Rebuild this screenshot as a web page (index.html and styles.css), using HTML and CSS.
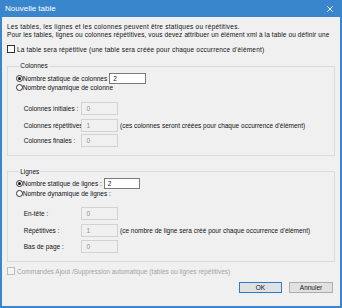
FILE: index.html
```html
<!DOCTYPE html>
<html lang="fr">
<head>
<meta charset="utf-8">
<title>Nouvelle table</title>
<link rel="stylesheet" href="styles.css">
</head>
<body>
<div class="window">
  <div class="titlebar">
    <span class="title">Nouvelle table</span>
    <svg class="close" width="6" height="6" viewBox="0 0 6 6"><path d="M0.3 0.3L5.7 5.7M5.7 0.3L0.3 5.7" stroke="#fff" stroke-width="0.9" fill="none"/></svg>
  </div>
  <div class="main">
    <div class="intro">
      <p class="l1">Les tables, les lignes et les colonnes peuvent être statiques ou répétitives.</p>
      <p class="l2">Pour les tables, lignes ou colonnes répétitives, vous devez attribuer un élément xml à la table ou définir une</p>
    </div>
    <label class="check"><span class="box"></span><span class="wide">La table sera répétitive (une table sera créée pour chaque occurrence d'élément)</span></label>

    <fieldset class="group">
      <legend>Colonnes</legend>
      <div class="row static"><span class="radio checked"></span><span class="rlabel">Nombre statique de colonnes</span><span class="field active cols">2</span></div>
      <div class="row dyn"><span class="radio"></span><span class="rlabel">Nombre dynamique de colonne</span></div>
      <div class="sub">
        <div class="subrow"><span class="sublabel">Colonnes initiales :</span><span class="field disabled">0</span></div>
        <div class="subrow second"><span class="sublabel">Colonnes répétitives</span><span class="field disabled">1</span><span class="note">(ces colonnes seront créées pour chaque occurrence d'élément)</span></div>
        <div class="subrow third"><span class="sublabel">Colonnes finales :</span><span class="field disabled">0</span></div>
      </div>
    </fieldset>

    <fieldset class="group lines">
      <legend>Lignes</legend>
      <div class="row static"><span class="radio checked"></span><span class="rlabel">Nombre statique de lignes :</span><span class="field active rows">2</span></div>
      <div class="row dyn"><span class="radio"></span><span class="rlabel">Nombre dynamique de lignes :</span></div>
      <div class="sub">
        <div class="subrow"><span class="sublabel">En-tête :</span><span class="field disabled">0</span></div>
        <div class="subrow second"><span class="sublabel">Répétitives :</span><span class="field disabled">1</span><span class="note">(ce nombre de ligne sera créé pour chaque occurrence d'élément)</span></div>
        <div class="subrow third"><span class="sublabel">Bas de page :</span><span class="field disabled">0</span></div>
      </div>
    </fieldset>

    <label class="check off"><span class="box"></span><span>Commandes Ajout /Suppression automatique (tables ou lignes répétitives)</span></label>

    <div class="buttons">
      <button class="btn default">OK</button>
      <button class="btn">Annuler</button>
    </div>
  </div>
</div>
</body>
</html>
```

FILE: styles.css
```css
* { box-sizing: border-box; }
html, body { margin: 0; padding: 0; background: #f0f0f0; }
body {
  font-family: "Liberation Sans", Arial, sans-serif;
  font-size: 6.5px;
  color: #111;
}
p { margin: 0; }

.window {
  width: 342px;
  height: 308px;
  background: #f0f0f0;
  border: 2px solid #3a86cc;
  border-top: 0;
  display: flex;
  flex-direction: column;
}

.titlebar {
  flex: none;
  height: 17px;
  margin: 0 -2px;
  padding: 0 9px 0 5px;
  background: #3a86cc;
  color: #fff;
  display: flex;
  align-items: center;
  justify-content: space-between;
  font-size: 8px;
}
.close { display: block; }

.main {
  flex: 1;
  display: flex;
  flex-direction: column;
  padding: 6px 5px 0 5px;
}

.intro {
  height: 21px;
  line-height: 8px;
  white-space: nowrap;
}
.intro .l1 { letter-spacing: 0.25px; }
.intro .l2 { letter-spacing: 0.12px; }

.wide { letter-spacing: 0.18px; white-space: nowrap; }

.check {
  display: flex;
  align-items: center;
  height: 9px;
  margin-top: 0.5px;
  line-height: 9px;
}
.box {
  width: 8px;
  height: 8px;
  border: 1px solid #333;
  background: #fff;
  margin-right: 2px;
  flex: none;
}
.check.off { color: #a3a3a3; margin-top: 5px; }
.check.off .box { border-color: #bcbcbc; background: #f4f4f4; }

.group {
  margin: 8.5px 0 0 0;
  padding: 0 0 8.3px 7.7px;
  border: 1px solid #dcdcdc;
  min-inline-size: 0;
}
.group.lines { margin-top: 11.3px; }
.group legend {
  padding: 0 1px;
  margin-left: 3.5px;
  line-height: 8px;
  height: 8px;
}

.row {
  display: flex;
  align-items: center;
}
.row.static { height: 11px; margin-top: 2.5px; }
.row.dyn { height: 8px; }

.radio {
  width: 7px;
  height: 7px;
  border: 1px solid #333;
  border-radius: 50%;
  background: #fff;
  flex: none;
  display: flex;
  align-items: center;
  justify-content: center;
}
.radio.checked::after {
  content: "";
  width: 3px;
  height: 3px;
  border-radius: 50%;
  background: #111;
}

.field {
  display: flex;
  align-items: center;
  width: 36.6px;
  flex: none;
  padding-left: 4px;
}
.field.active {
  height: 11px;
  background: #fff;
  border: 1px solid #7a7a7a;
  padding-left: 3px;
  margin-left: 2px;
}
.field.disabled {
  height: 13px;
  background: #f0f0f0;
  border: 1px solid #d2d2d2;
  color: #8c8c8c;
}

.sub {
  margin-top: 10px;
  padding-left: 8px;
  display: flex;
  flex-direction: column;
}
.subrow {
  display: flex;
  align-items: center;
  height: 13px;
}
.subrow.second { margin-top: 4px; }
.subrow.third { margin-top: 2.5px; }
.sublabel { width: 57.7px; flex: none; white-space: nowrap; }
.note { margin-left: 2px; white-space: nowrap; }

.buttons {
  display: flex;
  justify-content: flex-end;
  gap: 7px;
  margin-top: 6px;
  padding-right: 2px;
}
.btn {
  font-family: inherit;
  font-size: 6.5px;
  color: #111;
  height: 11px;
  width: 44px;
  padding: 0;
  background: #e1e1e1;
  border: 1px solid #adadad;
  line-height: 9px;
}
.btn.default { border-color: #2a7bd0; width: 43px; }
```
